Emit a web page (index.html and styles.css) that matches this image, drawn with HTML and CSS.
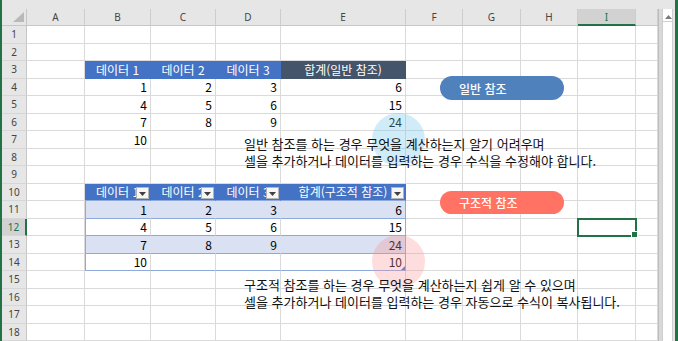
FILE: index.html
```html
<!DOCTYPE html>
<html lang="ko">
<head>
    <meta charset="UTF-8">
    <meta name="viewport" content="width=device-width, initial-scale=1.0">
    <title>구조적 참조</title>
    <link rel="stylesheet" href="styles.css">
</head>
<body>

    <div class="band"></div>

    <div class="pane">
        <div class="sheet-wrap">
            <!-- Worksheet grid, filled by the script below -->
            <div class="sheet" id="sheet"></div>

            <!-- Shapes drawn over the sheet -->
            <div class="spot spot-blue"></div>
            <div class="spot spot-red"></div>
            <div class="pill pill-blue">일반 참조</div>
            <div class="pill pill-red">구조적 참조</div>
            <div class="note note-1">일반 참조를 하는 경우 무엇을 계산하는지 알기 어려우며<br>셀을 추가하거나 데이터를 입력하는 경우 수식을 수정해야 합니다.</div>
            <div class="note note-2">구조적 참조를 하는 경우 무엇을 계산하는지 쉽게 알 수 있으며<br>셀을 추가하거나 데이터를 입력하는 경우 자동으로 수식이 복사됩니다.</div>
        </div>

        <div class="frame"></div>

        <div class="vscroll">
            <div class="scroll-btn">
                <svg width="7" height="4" viewBox="0 0 7 4"><polygon points="0,4 7,4 3.5,0" fill="#7a7a7a"/></svg>
            </div>
        </div>
    </div>

    <script>
        const letters = ['A', 'B', 'C', 'D', 'E', 'F', 'G', 'H', 'I', 'J'];

        const values = {
            B3: '데이터 1', C3: '데이터 2', D3: '데이터 3', E3: '합계(일반 참조)',
            B4: '1', C4: '2', D4: '3', E4: '6',
            B5: '4', C5: '5', D5: '6', E5: '15',
            B6: '7', C6: '8', D6: '9', E6: '24',
            B7: '10',
            B10: '데이터 1', C10: '데이터 2', D10: '데이터 3', E10: '합계(구조적 참조)',
            B11: '1', C11: '2', D11: '3', E11: '6',
            B12: '4', C12: '5', D12: '6', E12: '15',
            B13: '7', C13: '8', D13: '9', E13: '24',
            B14: '10', E14: '10'
        };

        const filterIcon = '<span class="filter"><svg width="7" height="4" viewBox="0 0 7 4"><polygon points="0,0 7,0 3.5,4" fill="#404040"/></svg></span>';

        const sheet = document.getElementById('sheet');

        function addCell(cls, html) {
            const div = document.createElement('div');
            div.className = cls;
            div.innerHTML = html || '';
            sheet.appendChild(div);
        }

        // Column headers
        addCell('corner', '<svg width="11" height="10" viewBox="0 0 11 10"><polygon points="11,0 11,10 0,10" fill="#b9b9b9"/></svg>');
        letters.forEach(l => {
            addCell(l === 'I' ? 'col-head active' : 'col-head', l === 'J' ? '' : l);
        });

        // Rows
        for (let r = 1; r <= 18; r++) {
            addCell(r === 12 ? 'row-head active' : 'row-head', r);

            letters.forEach(l => {
                const key = l + r;
                const inB2E = 'BCDE'.includes(l);
                let cls = 'cell';
                let html = values[key] ? '<span class="txt">' + values[key] + '</span>' : '';

                if (r === 3 && inB2E) {
                    cls += l === 'E' ? ' head-dark' : ' head-blue';
                } else if (r >= 10 && r <= 14 && inB2E) {
                    cls += ' tbl';
                    if (r === 10) {
                        cls += ' head-blue';
                        html += filterIcon;
                    } else {
                        cls += ' num';
                        if (r % 2 === 1) cls += ' band-row';
                        if (l === 'B') cls += ' tbl-first';
                        if (l === 'E') cls += ' tbl-last';
                    }
                } else if (values[key]) {
                    cls += ' num';
                }

                if (key === 'E14') cls += ' resize';
                if (key === 'I12') cls += ' selected';

                addCell(cls, html);
            });
        }
    </script>

</body>
</html>
```

FILE: styles.css
```css
* {
    box-sizing: border-box;
}

body {
    margin: 0;
    width: 678px;
    height: 341px;
    overflow: hidden;
    background-color: #fff;
    border-left: 2px solid #217346;
    border-right: 3px solid #217346;
    display: flex;
    flex-direction: column;
    font-family: "Noto Sans CJK KR", "Noto Sans", sans-serif;
}

.band {
    height: 9px;
    background-color: #e6e6e6;
}

.pane {
    display: flex;
    flex: 1;
}

.sheet-wrap {
    position: relative;
    width: 656px;
}

.sheet {
    display: grid;
    grid-template-columns: 25px 58px 66px 65px 65px 125px 57px 58px 57px 58px 22px;
    grid-template-rows: 17px repeat(18, 17.5px);
}

/* Headers */

.corner {
    background-color: #e6e6e6;
    border-right: 1px solid #c6c6c6;
    border-bottom: 1px solid #c6c6c6;
    display: flex;
    align-items: flex-end;
    justify-content: flex-end;
    padding: 0 2px 3px 0;
}

.col-head, .row-head {
    background-color: #e6e6e6;
    color: #444;
    font-family: "Noto Sans", sans-serif;
    font-size: 10px;
    display: flex;
    align-items: center;
    justify-content: center;
}

.col-head {
    border-right: 1px solid #cdcdcd;
    border-bottom: 1px solid #c6c6c6;
}

.row-head {
    border-right: 1px solid #c6c6c6;
    border-bottom: 1px solid #d6d6d6;
}

.col-head.active {
    background-color: #d2d2d2;
    color: #217346;
    border-bottom: 2px solid #217346;
}

.row-head.active {
    background-color: #d2d2d2;
    color: #217346;
    border-right: 2px solid #217346;
}

/* Cells */

.cell {
    position: relative;
    border-right: 1px solid #dadada;
    border-bottom: 1px solid #dadada;
    display: flex;
    align-items: center;
    padding: 0 3px;
    font-size: 12px;
    color: #000;
    white-space: nowrap;
    overflow: hidden;
}

.num {
    justify-content: flex-end;
}

.head-blue {
    background-color: #4472c4;
    border-color: #4472c4;
    color: #fff;
    justify-content: center;
}

.head-dark {
    background-color: #44546a;
    border-color: #44546a;
    color: #fff;
    justify-content: center;
}

.tbl {
    border-bottom-color: #8ea9db;
}

.band-row {
    background-color: #d9e1f2;
    border-right-color: #d9e1f2;
}

.tbl-first {
    box-shadow: inset 1px 0 0 #8ea9db;
}

.tbl-last {
    border-right-color: #8ea9db;
}

.filter {
    position: absolute;
    right: 1px;
    top: 3px;
    width: 13px;
    height: 12px;
    background-color: #f6f6f6;
    border: 1px solid #b4b4b4;
    display: flex;
    align-items: flex-end;
    justify-content: center;
    padding-bottom: 2px;
}

.resize::after {
    content: "";
    position: absolute;
    right: 0;
    bottom: 0;
    border-left: 4px solid transparent;
    border-bottom: 4px solid #4472c4;
}

.selected {
    overflow: visible;
    outline: 2px solid #217346;
    outline-offset: -1px;
    z-index: 1;
}

.selected::after {
    content: "";
    position: absolute;
    right: -3px;
    bottom: -3px;
    width: 5px;
    height: 5px;
    background-color: #217346;
    border: 1px solid #fff;
}

/* Shapes */

.spot {
    position: absolute;
    width: 53px;
    height: 53px;
    border-radius: 50%;
}

.spot-blue {
    left: 370px;
    top: 104px;
    background-color: rgba(120, 200, 235, 0.35);
}

.spot-red {
    left: 370px;
    top: 226px;
    background-color: rgba(250, 150, 150, 0.32);
}

.pill {
    position: absolute;
    left: 438px;
    width: 124px;
    border-radius: 12px;
    color: #fff;
    font-size: 12px;
    font-weight: 500;
    display: flex;
    align-items: center;
    padding-left: 19px;
}

.pill-blue {
    top: 67px;
    height: 24px;
    background-color: #4f81bd;
}

.pill-red {
    top: 182px;
    height: 23px;
    background-color: #ff7264;
}

.note {
    position: absolute;
    left: 242px;
    font-size: 13px;
    line-height: 17px;
    color: #111;
    white-space: nowrap;
}

.note-1 {
    top: 126px;
}

.note-2 {
    top: 267px;
}

/* Frame and scroll bar */

.frame {
    width: 4px;
    background-color: #d9d9d9;
    border-left: 1px solid #bdbdbd;
}

.vscroll {
    width: 13px;
    background-color: #fff;
    border-left: 1px solid #cfcfcf;
    border-right: 2px solid #e6e6e6;
    box-shadow: inset -1px 0 0 #cfcfcf;
    padding-top: 3px;
}

.scroll-btn {
    height: 10px;
    display: flex;
    align-items: center;
    justify-content: center;
    border-bottom: 1px solid #cfcfcf;
}
```
